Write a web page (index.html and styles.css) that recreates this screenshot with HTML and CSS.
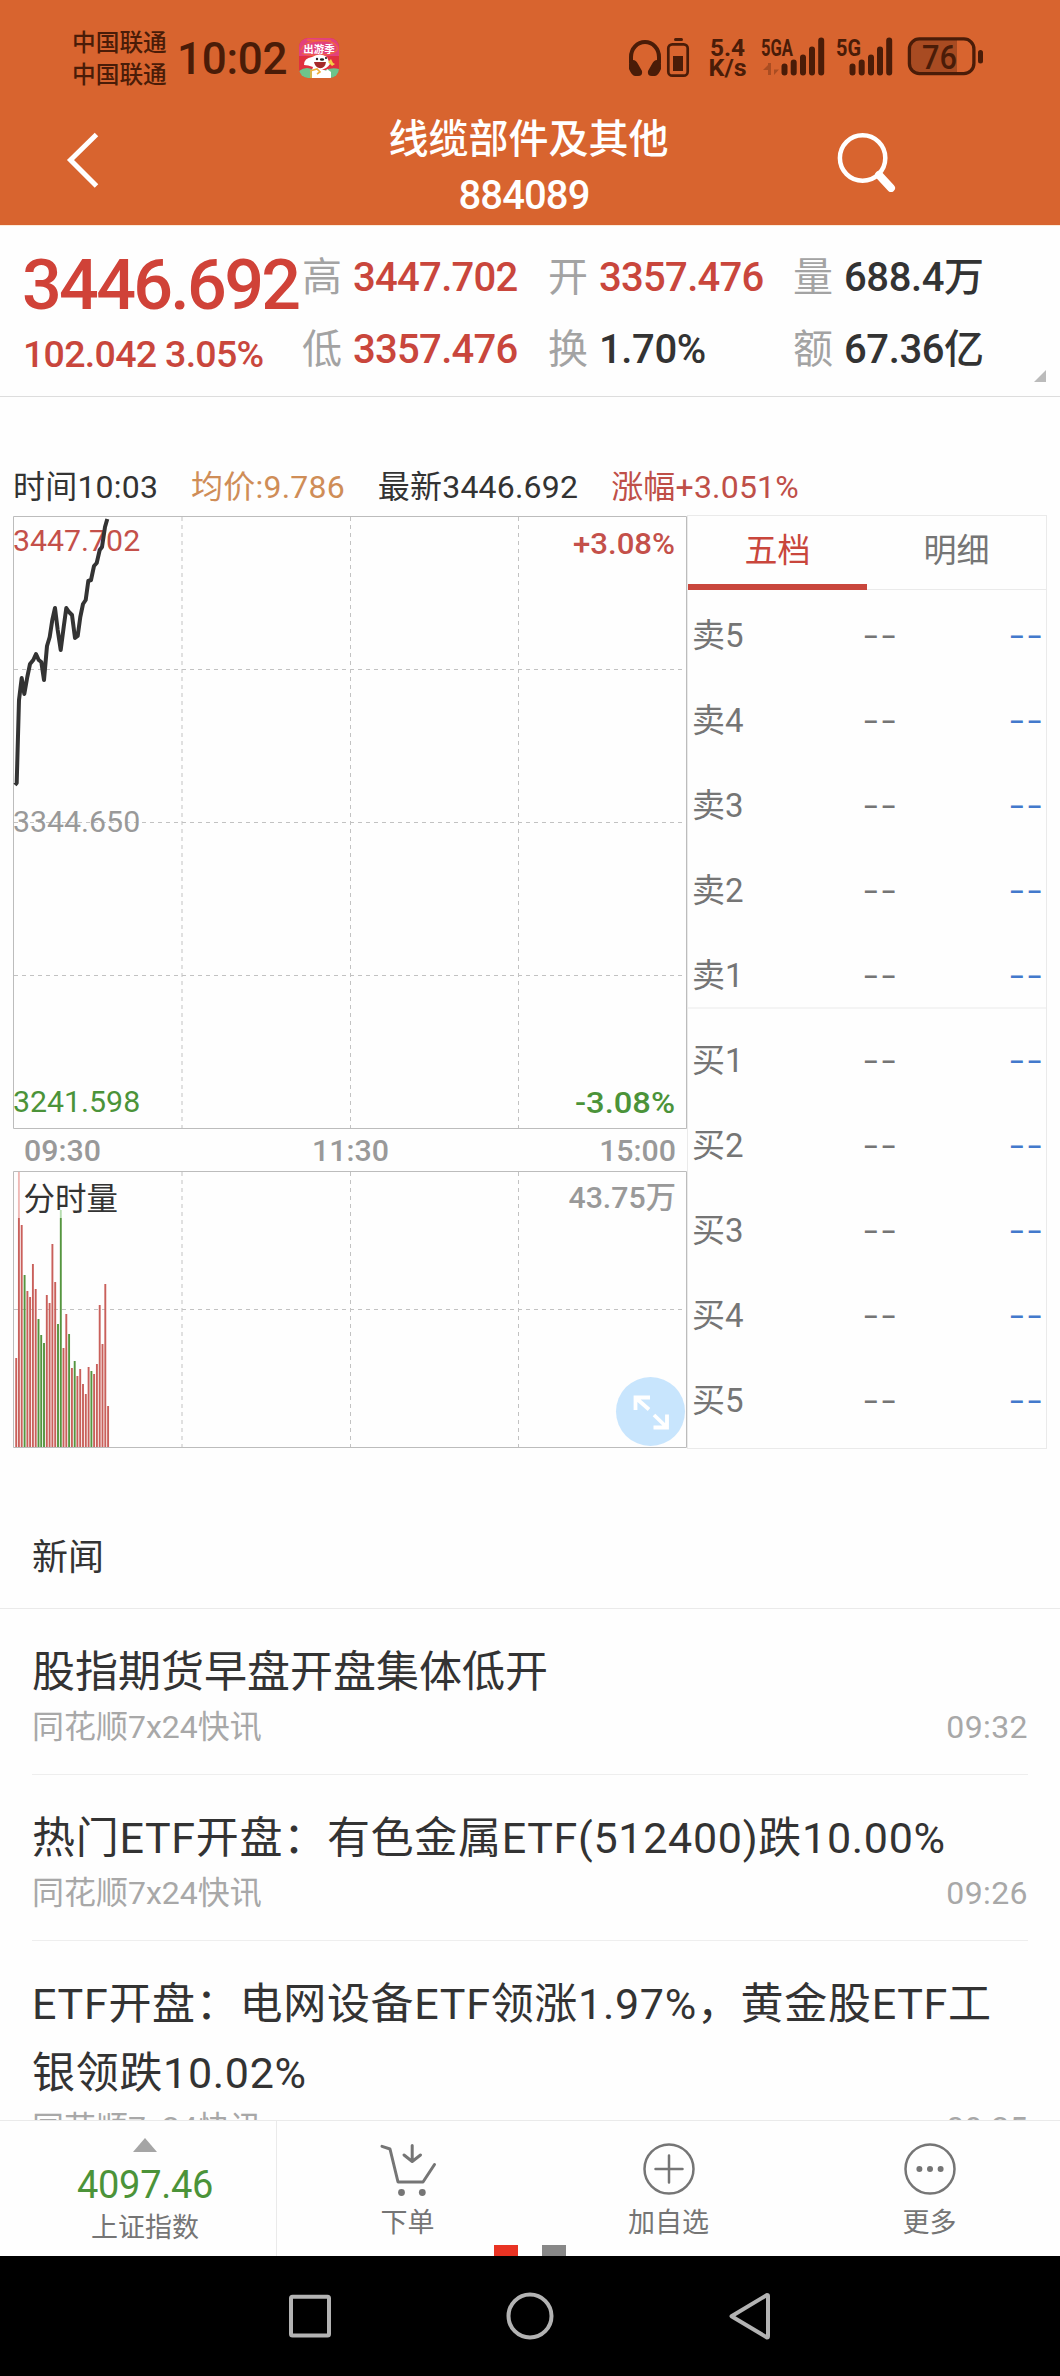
FILE: index.html
```html
<!DOCTYPE html>
<html lang="zh-CN">
<head>
<meta charset="utf-8">
<title>线缆部件及其他 884089</title>
<link rel="stylesheet" href="styles.css">
</head>
<body>
<div class="app">
  <header class="header">
    <div class="status">
      <div class="carriers"><span>中国联通</span><span>中国联通</span></div>
      <span class="clock">10:02</span>
      <svg class="app-badge" width="40" height="40" viewBox="0 0 40 40">
        <defs><clipPath id="badge"><rect width="40" height="40" rx="9"/></clipPath></defs>
        <g clip-path="url(#badge)">
          <rect width="40" height="40" fill="#e0303f"/>
          <path d="M0 0H40V18H0z" fill="#e2417c"/>
          <path d="M0 33Q8 27 16 33H24Q32 29 40 31V40H0z" fill="#6cc58a"/>
          <path d="M2 12C8 0 34 0 38 9S8 19 3 15M8 2L32 3" fill="none" stroke="#f0653f" stroke-width="1.3"/>
          <text class="badge-text" x="20" y="15" text-anchor="middle">出游季</text>
          <path d="M13 19Q21 14 28 19L31 26Q27 32 22 31L28 33V40H13V32L14 29Q9 27 5 27Q5 20 13 19z" fill="#fff"/>
          <path d="M28 31L32 34V40H24z" fill="#fff"/>
          <path d="M15 24H27Q26 31 20 30Q16 29 15 24z" fill="#a52a2a"/>
          <circle cx="18" cy="21" r="1.2" fill="#222"/><ellipse cx="23" cy="21.5" rx="2.2" ry="1.2" fill="#222"/><circle cx="27" cy="20" r="1.1" fill="#222"/>
          <path d="M32 21L34 25L36 26L33 28L31 26L29 24z" fill="#f5cf47"/>
          <path d="M11 33L18 31L21 34L18 36M12 33V40" fill="none" stroke="#efb03c" stroke-width="1.6"/>
        </g>
      </svg>
      <svg class="indicators" width="364" height="50" viewBox="624 34 364 50">
        <path d="M631 64V58A14 15 0 0 1 659 58V64" fill="none" stroke="#4a1c08" stroke-width="4"/>
        <path d="M629 65Q629 61 633 61Q636 61 638 65L642 72Q643 77 638 77H635Q632 77 629 70zM661 65Q661 61 657 61Q654 61 652 65L648 72Q647 77 652 77H655Q658 77 661 70z" fill="#4a1c08"/>
        <rect x="674" y="39" width="9" height="3" rx="1.5" fill="#4a1c08"/>
        <rect x="668.3" y="45.3" width="19.4" height="31.4" rx="4" fill="none" stroke="#4a1c08" stroke-width="2.7"/>
        <rect x="673" y="57" width="10" height="15" fill="#4a1c08"/>
        <text class="ind" x="727.500" y="56.500" text-anchor="middle" font-size="24" textLength="35" lengthAdjust="spacingAndGlyphs">5.4</text>
        <text class="ind" x="727.500" y="76.500" text-anchor="middle" font-size="24" textLength="38" lengthAdjust="spacingAndGlyphs">K/s</text>
        <text class="ind" x="761" y="57" font-size="24" textLength="32" lengthAdjust="spacingAndGlyphs">5GA</text>
        <text class="ind" x="836" y="57" font-size="24" textLength="25" lengthAdjust="spacingAndGlyphs">5G</text>
        <path d="M768 64V76H771V64M769 65L763 71H769M774 64V76L779 70.500H774V64" fill="#aa4d22"/>
        <path d="M784.500 67.500V73.500M793.700 63.500V73.500M803 58.500V73.500M812 50.500V73.500M821.200 41.500V73.500M852.500 67.500V73.500M861.700 63.500V73.500M871 58.500V73.500M880 50.500V73.500M889.200 41.500V73.500" stroke="#4a1c08" stroke-width="6" stroke-linecap="round"/>
        <path d="M917 41H957V74H917Q911 74 911 66V49Q911 41 917 41z" fill="#a84b22"/>
        <rect x="909.400" y="39.900" width="64.500" height="34.700" rx="10" fill="none" stroke="#4a1c08" stroke-width="3.3"/>
        <rect x="978" y="51" width="5" height="13.500" rx="2.500" fill="#4a1c08"/>
        <text class="ind level" x="939.500" y="70" text-anchor="middle" font-size="33.500" textLength="35" lengthAdjust="spacingAndGlyphs">76</text>
      </svg>
    </div>
    <div class="titlebar">
      <svg class="back" width="40" height="64" viewBox="62 128 40 64"><path d="M96.500 134.500L70.500 160L96.500 186" fill="none" stroke="#fff" stroke-width="5"/></svg>
      <div class="title"><span>线缆部件及其他</span><span class="code">884089</span></div>
      <svg class="search" width="64" height="64" viewBox="834 128 64 64"><circle cx="862.600" cy="158" r="22.700" fill="none" stroke="#fff" stroke-width="4.500"/><path d="M879 175L891 188" stroke="#fff" stroke-width="8" stroke-linecap="round"/></svg>
    </div>
  </header>

  <section class="quote">
    <div class="last"><span class="price">3446.692</span><span class="change">102.042 3.05%</span></div>
    <dl class="stats">
      <div><dt>高</dt><dd class="up">3447.702</dd></div>
      <div><dt>开</dt><dd class="up">3357.476</dd></div>
      <div><dt>量</dt><dd>688.4万</dd></div>
      <div><dt>低</dt><dd class="up">3357.476</dd></div>
      <div><dt>换</dt><dd>1.70%</dd></div>
      <div><dt>额</dt><dd>67.36亿</dd></div>
    </dl>
    <i class="corner"></i>
  </section>

  <div class="legend"><span>时间10:03</span><span class="avg">均价:9.786</span><span>最新3446.692</span><span class="up2">涨幅+3.051%</span></div>

  <section class="market">
    <svg class="chart" width="675" height="934" viewBox="12 515 675 934">
      <path class="grid" d="M182 517V1128M350.500 517V1128M518.500 517V1128M14 669.500H686M14 822.500H686M14 975.500H686M182 1172V1447M350.500 1172V1447M518.500 1172V1447M14 1309.500H686"/>
      <path class="frame" d="M13.500 516.500H686.500V1128.500H13.500zM13.500 1171.500H686.500V1447.500H13.500z"/>
      <text class="lbl red" x="13" y="551">3447.702</text>
      <text class="lbl grey" x="13" y="831.500">3344.650</text>
      <text class="lbl green" x="13" y="1111.500">3241.598</text>
      <text class="lbl red bold" x="573" y="553.500" textLength="102" lengthAdjust="spacingAndGlyphs">+3.08%</text>
      <text class="lbl green bold" x="575" y="1112.500" textLength="100" lengthAdjust="spacingAndGlyphs">-3.08%</text>
      <text class="lbl grey mid" x="24" y="1161">09:30</text>
      <text class="lbl grey mid" x="350.500" y="1161" text-anchor="middle">11:30</text>
      <text class="lbl grey mid" x="676" y="1161" text-anchor="end">15:00</text>
      <polyline class="trend" points="15,785 16.700,783 19,700 21.700,678 24.300,694 27.300,677 30,664 33.300,660 36,654 38.700,660 41.300,662 44,680 47,646 49.700,637 52.300,620 55,608 57.700,630 60.700,650 63.700,627 66.300,608 69,612 72,615 75,638 77.700,636 80.300,617 83,604 85.700,600 88.300,581 91,580 94,566 96.700,563 99.700,550 102,547 105,527 107.300,519"/>
      <path class="bar pale-r" d="M18.900 1172V1218"/>
      <path class="bar pale-g" d="M60.800 1210V1218"/>
      <path class="bar r" d="M16.200 1358V1447M18.900 1218V1447M21.700 1225V1447M27.400 1291V1447M30.100 1297V1447M32.900 1264V1447M35.700 1289V1447M46.800 1295V1447M49.600 1303V1447M52.400 1244V1447M55.200 1282V1447M63.500 1348V1447M66.300 1314V1447M71.900 1368V1447M77.400 1376V1447M80.200 1369V1447M83 1384V1447M85.800 1394V1447M88.600 1367V1447M94.100 1374V1447M96.900 1364V1447M99.700 1305V1447M102.500 1344V1447M105.300 1284V1447M108.100 1406V1447"/>
      <path class="bar g" d="M24.600 1275V1447M38.500 1319V1447M41.200 1335V1447M44 1343V1447M58 1324V1447M60.800 1218V1447M69.100 1334V1447M74.700 1361V1447M91.400 1371V1447"/>
      <text class="vol-title" x="23.500" y="1209.500">分时量</text>
      <text class="lbl grey mid" x="676" y="1208" text-anchor="end">43.75万</text>
      <circle cx="650.500" cy="1411.500" r="34.500" fill="#c8e5fd"/>
      <path d="M635.500 1410V1397.500H650M636.500 1398.500L649 1409.500M667 1414.500V1427.500H653.500M654 1415L666 1426.500" fill="none" stroke="#fff" stroke-width="3.800"/>
    </svg>
    <div class="book">
      <div class="tabs"><span class="tab active">五档</span><span class="tab">明细</span></div>
      <div class="row"><span>卖5</span><b>--</b><b class="qty">--</b></div>
      <div class="row"><span>卖4</span><b>--</b><b class="qty">--</b></div>
      <div class="row"><span>卖3</span><b>--</b><b class="qty">--</b></div>
      <div class="row"><span>卖2</span><b>--</b><b class="qty">--</b></div>
      <div class="row last-ask"><span>卖1</span><b>--</b><b class="qty">--</b></div>
      <div class="row first-bid"><span>买1</span><b>--</b><b class="qty">--</b></div>
      <div class="row"><span>买2</span><b>--</b><b class="qty">--</b></div>
      <div class="row"><span>买3</span><b>--</b><b class="qty">--</b></div>
      <div class="row"><span>买4</span><b>--</b><b class="qty">--</b></div>
      <div class="row"><span>买5</span><b>--</b><b class="qty">--</b></div>
    </div>
  </section>

  <section class="news">
    <h2>新闻</h2>
    <article><h3>股指期货早盘开盘集体低开</h3><p><span>同花顺7x24快讯</span><time>09:32</time></p></article>
    <article class="mixed"><h3>热门ETF开盘：有色金属ETF(512400)跌10.00%</h3><p><span>同花顺7x24快讯</span><time>09:26</time></p></article>
    <article class="mixed"><h3>ETF开盘：电网设备ETF领涨1.97%，黄金股ETF工银领跌10.02%</h3><p><span>同花顺7x24快讯</span><time>09:25</time></p></article>
  </section>

  <footer class="toolbar">
    <div class="index"><i class="caret"></i><span class="index-value">4097.46</span><span class="index-name">上证指数</span></div>
    <div class="action">
      <svg width="60" height="56" viewBox="377.500 2141 60 56"><g fill="none" stroke="#757575" stroke-width="3" stroke-linecap="round" stroke-linejoin="round"><path d="M381.500 2146.300L389.500 2149L397.500 2182H422.500L434 2164.500"/><path d="M411.700 2145.500V2161M403.500 2155L411.700 2161.500L420 2155"/></g><circle cx="401" cy="2192.500" r="3.400" fill="#757575"/><circle cx="421.800" cy="2192.500" r="3.400" fill="#757575"/></svg>
      <span>下单</span>
    </div>
    <div class="action">
      <svg width="60" height="56" viewBox="-30 -28 60 56"><g fill="none" stroke="#757575" stroke-width="2.500" stroke-linecap="round"><circle r="24.500"/><path d="M-13.500 0H13.500M0 -13.500V13.500"/></g></svg>
      <span>加自选</span>
    </div>
    <div class="action">
      <svg width="60" height="56" viewBox="-30 -28 60 56"><circle r="24.500" fill="none" stroke="#757575" stroke-width="2.500"/><g fill="#757575"><circle cx="-10.600" r="3"/><circle r="3"/><circle cx="10.600" r="3"/></g></svg>
      <span>更多</span>
    </div>
    <div class="pager"><i class="on"></i><i></i></div>
  </footer>

  <nav class="sysnav">
    <svg width="520" height="60" viewBox="270 2286 520 60" fill="none" stroke="#b3b3b3" stroke-width="4" stroke-linejoin="round"><rect x="291" y="2296.800" width="38" height="38.600" rx="1.500"/><circle cx="530" cy="2316" r="21.500"/><path d="M731.500 2316.200L767 2295Q768 2295 768 2296V2336Q768 2337.500 767 2337.500z"/></svg>
  </nav>
</div>
</body>
</html>
```
FILE: styles.css
```css
* { box-sizing: border-box; margin: 0; padding: 0; }
body { width: 1060px; background: #fff; font-family: Roboto, "Noto Sans CJK SC", sans-serif; color: #333; }
i, b { font-style: normal; font-weight: 400; }
svg { display: block; flex: none; }
.app { width: 1060px; height: 2376px; display: flex; flex-direction: column; overflow: hidden; background: #fefefe; }

.header { height: 225px; flex: none; background: #d8642f; color: #fff; }
.status { height: 116px; padding: 0 72px 0 72px; display: flex; align-items: center; color: #4a1c08; }
.carriers { display: flex; flex-direction: column; font-size: 23.7px; line-height: 32px; font-weight: 500; width: 105px; padding-top: 1px; }
.clock { font-size: 44px; line-height: 60px; font-weight: 500; width: 122px; padding-top: 1px; letter-spacing: -.3px; }
.indicators { margin-left: 285px; }
.badge-text { font-size: 10.500px; font-weight: 700; fill: #fff; }
.ind { font-weight: 700; fill: #4a1c08; }
.level { font-weight: 500; }
.titlebar { height: 109px; padding: 0 162px 0 62px; display: flex; align-items: center; justify-content: space-between; }
.back, .search { margin-bottom: 21px; }
.title { display: flex; flex-direction: column; align-items: center; font-size: 40px; font-weight: 500; line-height: 56px; margin-left: 121px; margin-bottom: 6px; }
.code { letter-spacing: -.9px; margin-right: 9px; }

.quote { height: 172px; flex: none; display: flex; position: relative; border-bottom: 1px solid #ddd; border-top: 1px solid #fcebd9; font-weight: 500; }
.last { width: 302px; padding: 17px 0 0 22px; color: #d04238; display: flex; flex-direction: column; white-space: nowrap; }
.price { font-size: 70px; line-height: 84px; letter-spacing: -2.7px; }
.change { font-size: 37.500px; line-height: 54px; letter-spacing: -.7px; padding-left: 1px; color: #c9463c; }
.stats { display: grid; grid-template-columns: 246px 245px 240px; grid-auto-rows: 72px; padding-top: 16px; }
.stats div { display: flex; font-size: 40px; line-height: 72px; white-space: nowrap; }
.stats dt { width: 51px; color: #a3a3a3; font-weight: 400; }
.stats dd { color: #333; letter-spacing: -.4px; }
.stats .up { color: #c9463c; letter-spacing: -.7px; }
.corner { position: absolute; right: 14px; bottom: 14px; width: 12px; height: 12px; background: #bbb; clip-path: polygon(100% 0, 100% 100%, 0 100%); }

.legend { height: 118px; flex: none; padding: 69px 0 0 13px; display: flex; gap: 33px; font-size: 32px; line-height: 42px; letter-spacing: .2px; white-space: nowrap; }
.avg { color: #cf8d57; }
.up2 { color: #bf4f48; }

.market { height: 934px; flex: none; padding-left: 12px; display: flex; }
.grid { fill: none; stroke: #c2c2c2; stroke-width: 1; stroke-dasharray: 4 4; }
.frame { fill: none; stroke: #bcbcbc; stroke-width: 1; }
.lbl { font-size: 30.300px; }
.red { fill: #c4504a; }
.green { fill: #4b9339; }
.grey { fill: #999; }
.bold { font-weight: 500; }
.mid { font-weight: 500; }
.vol-title { font-size: 31.500px; font-weight: 400; fill: #333; }
.trend { fill: none; stroke: #333; stroke-width: 4; stroke-linejoin: round; }
.bar { stroke-width: 1.900; }
.r { stroke: #c9605b; }
.g { stroke: #55953f; }
.pale-r { stroke: #efb9b6; }
.pale-g { stroke: #b5dcae; }

.book { width: 360px; border: 1px solid #eaeaea; font-size: 33px; color: #757575; }
.tabs { display: flex; height: 74px; border-bottom: 1px solid #eaeaea; }
.tab { flex: 1; height: 74px; line-height: 70px; text-align: center; border-bottom: 6px solid transparent; }
.active { color: #c9463c; border-bottom-color: #c9463c; }
.row { height: 85px; padding: 3px 0 0 4px; display: flex; align-items: center; }
.row span { flex: none; width: 170px; line-height: 60px; }
.row b { flex: none; width: 146px; margin-top: -3px; white-space: nowrap; font-family: Inter, sans-serif; font-size: 39px; font-weight: 300; line-height: 60px; color: #757575; }
.row .qty { width: 36px; color: #4379cc; }
.tabs + .row { margin-top: 2px; }
.last-ask { height: 77px; padding-top: 13px; border-bottom: 2px solid #f4f4f4; }
.first-bid { height: 93px; padding-top: 11px; }

.news { height: 671px; flex: none; overflow: hidden; }
.news h2 { height: 160px; padding: 82px 32px 0; font-size: 36px; line-height: 55px; font-weight: 400; border-bottom: 1px solid #eaeaea; }
.news article { margin: 0 32px; padding-top: 29px; min-height: 166px; border-bottom: 1px solid #eee; }
.news h3 { font-size: 43px; line-height: 69px; font-weight: 400; }
.news .mixed h3 { letter-spacing: .7px; }
.news p { display: flex; justify-content: space-between; font-size: 32px; line-height: 40px; color: #a8a8a8; }
.news time { letter-spacing: .4px; }

.toolbar { height: 136px; flex: none; display: flex; position: relative; border-top: 1px solid #eaeaea; background: #fefefe; color: #757575; font-size: 27px; }
.index { width: 277px; border-right: 1px solid #eaeaea; display: flex; flex-direction: column; align-items: center; padding: 17px 0 0 14px; }
.caret { width: 24px; height: 14px; background: #a5a5a5; clip-path: polygon(50% 0, 100% 100%, 0 100%); }
.index-value { font-size: 38px; line-height: 50px; margin-top: 8px; letter-spacing: -.3px; color: #4b9339; }
.index-name { line-height: 36px; }
.action { flex: 1; display: flex; flex-direction: column; align-items: center; padding-top: 20px; }
.action span { line-height: 36px; margin-top: 8px; }
.pager { position: absolute; left: 494px; bottom: 0; display: flex; gap: 24px; }
.pager i { width: 24px; height: 11px; background: #888; }
.pager .on { background: #e93323; }

.sysnav { height: 120px; flex: none; background: #000; display: flex; justify-content: center; align-items: center; }
```
